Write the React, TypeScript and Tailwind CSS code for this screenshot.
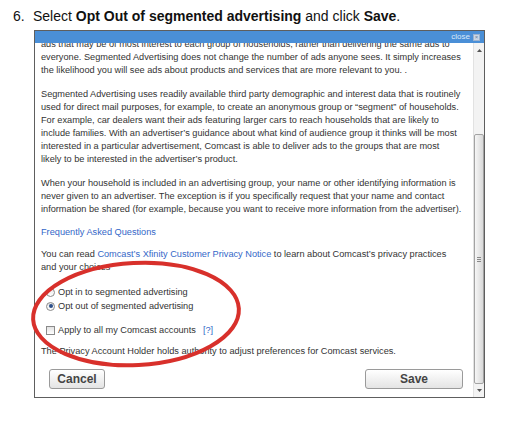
import React from "react";

const F = { fontFamily: '"Liberation Sans", Arial, sans-serif' };

function Radio({ checked }: { checked?: boolean }) {
  return (
    <span className="w-[9px] h-[9px] rounded-full border border-[#8a8a8a] bg-gradient-to-b from-[#e6e6e6] to-white flex items-center justify-center shrink-0">
      {checked ? <span className="w-[4px] h-[4px] rounded-full bg-[#2c4f8a]" /> : null}
    </span>
  );
}

export default function App() {
  return (
    <div className="relative w-[531px] h-[441px] bg-white text-[#333]" style={F}>
      {/* heading */}
      <div className="h-[30px] flex pl-[13px] pt-[7px] text-[14px] leading-[18px] text-[#111]">
        <span className="w-[20px]">6.</span>
        <span>
          Select <b>Opt Out of segmented advertising</b> and click <b>Save</b>.
        </span>
      </div>

      {/* dialog */}
      <div className="ml-[34px] w-[451px] h-[368px] border border-[#5e5e5e] flex flex-col">
        <div className="h-[12px] bg-[#4a8fd7] flex items-center justify-end pr-[4px] gap-[3px] shrink-0">
          <span className="text-[8px] leading-[8px] text-[#dbe8f7]">close</span>
          <span className="w-[7px] h-[7px] bg-[#c9d6e6] border border-[#9bb2cf] flex items-center justify-center text-[6px] leading-[6px] text-[#6a7f99]">×</span>
        </div>
        <div className="flex flex-1 min-h-0">
          <div className="flex-1 overflow-hidden pl-[6px] text-[9.2px] leading-[13px] text-[#333] whitespace-nowrap">
            <div className="-mt-[5px]">
              <p className="mb-[11px]">
                ads that may be of most interest to each group of households, rather than delivering the same ads to<br />
                everyone. Segmented Advertising does not change the number of ads anyone sees. It simply increases<br />
                the likelihood you will see ads about products and services that are more relevant to you. .
              </p>
              <p className="mb-[11px]">
                Segmented Advertising uses readily available third party demographic and interest data that is routinely<br />
                used for direct mail purposes, for example, to create an anonymous group or “segment” of households.<br />
                For example, car dealers want their ads featuring larger cars to reach households that are likely to<br />
                include families. With an advertiser’s guidance about what kind of audience group it thinks will be most<br />
                interested in a particular advertisement, Comcast is able to deliver ads to the groups that are most<br />
                likely to be interested in the advertiser’s product.
              </p>
              <p className="mb-[10px]">
                When your household is included in an advertising group, your name or other identifying information is<br />
                never given to an advertiser. The exception is if you specifically request that your name and contact<br />
                information be shared (for example, because you want to receive more information from the advertiser).
              </p>
              <p className="mb-[9px] text-[#3467c8]">Frequently Asked Questions</p>
              <p className="mb-[11px]">
                You can read <span className="text-[#3467c8]">Comcast’s Xfinity Customer Privacy Notice</span> to learn about Comcast’s privacy practices<br />
                and your choices
              </p>
              <div className="flex flex-col">
                <label className="h-[14px] flex items-center gap-[3px] pl-[5px]">
                  <Radio />
                  <span>Opt in to segmented advertising</span>
                </label>
                <label className="h-[14px] flex items-center gap-[3px] pl-[5px]">
                  <Radio checked />
                  <span>Opt out of segmented advertising</span>
                </label>
              </div>
              <label className="mt-[10px] h-[14px] flex items-center gap-[3px] pl-[5px]">
                <span className="w-[9px] h-[9px] border border-[#8a8a8a] bg-gradient-to-b from-[#e2e2e2] to-white shrink-0" />
                <span>Apply to all my Comcast accounts</span>
                <span className="ml-[4px] text-[#3467c8]">[?]</span>
              </label>
              <p className="mt-[8px]">The Privacy Account Holder holds authority to adjust preferences for Comcast services.</p>
              <div className="mt-[11px] flex justify-between pl-[8px] pr-[10px]">
                <button className="w-[56px] h-[20px] rounded-[3px] border border-[#9a9a9a] bg-gradient-to-b from-white to-[#e4e4e4] text-[12px] font-bold text-[#444] leading-[18px]">
                  Cancel
                </button>
                <button className="w-[98px] h-[20px] rounded-[3px] border border-[#9a9a9a] bg-gradient-to-b from-white to-[#e4e4e4] text-[12px] font-bold text-[#444] leading-[18px]">
                  Save
                </button>
              </div>
            </div>
          </div>
          {/* scrollbar */}
          <div className="w-[11px] flex flex-col bg-[#f3f3f3] border-l border-[#e2e2e2] shrink-0">
            <div className="h-[14px] flex items-center justify-center shrink-0">
              <svg width="5" height="3" viewBox="0 0 5 3"><path d="M0 3 L2.5 0 L5 3 Z" fill="#555" /></svg>
            </div>
            <div className="h-[77px] shrink-0" />
            <div className="flex-1 rounded-[2px] border border-[#a3a3a3] bg-gradient-to-r from-[#f6f6f6] to-[#d9d9d9] flex items-center justify-center">
              <div className="flex flex-col gap-[1px]">
                <span className="block w-[4px] h-px bg-[#888]" />
                <span className="block w-[4px] h-px bg-[#888]" />
                <span className="block w-[4px] h-px bg-[#888]" />
              </div>
            </div>
            <div className="h-[13px] flex items-center justify-center shrink-0">
              <svg width="5" height="3" viewBox="0 0 5 3"><path d="M0 0 L2.5 3 L5 0 Z" fill="#555" /></svg>
            </div>
          </div>
        </div>
      </div>

      {/* red annotation */}
      <svg className="absolute left-0 top-0 pointer-events-none" width="531" height="441">
        <ellipse cx="136" cy="314" rx="103" ry="51" fill="none" stroke="#d8302b" strokeWidth="4" transform="rotate(-3 136 314)" />
      </svg>
    </div>
  );
}
